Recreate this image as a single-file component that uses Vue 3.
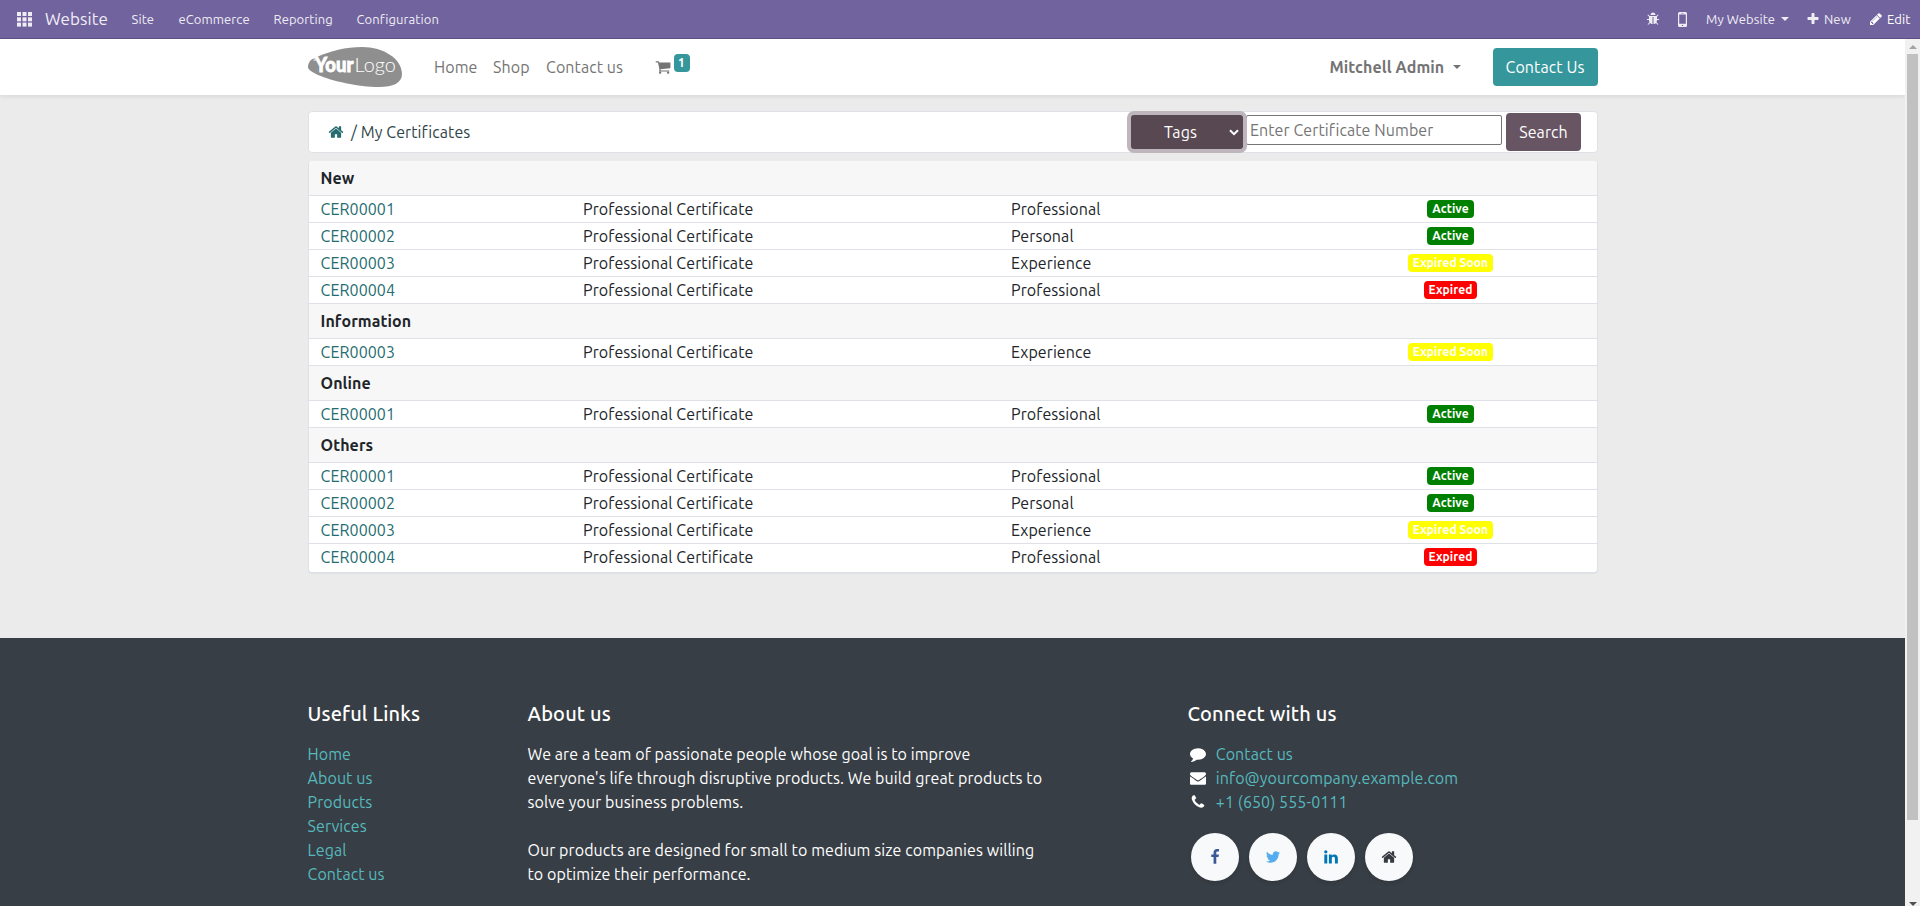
<script setup>
const icons = {
  home: 'M1472 992v480q0 26-19 45t-45 19h-384v-384h-256v384h-384q-26 0-45-19t-19-45v-480q0-1 .5-3t.5-3l575-474 575 474q1 2 1 6zm223-69l-62 74q-8 9-21 11h-3q-13 0-21-7l-692-577-692 577q-12 8-24 7-13-2-21-11l-62-74q-8-10-7-23.5t11-21.5l719-599q32-26 76-26t76 26l244 204v-195q0-14 9-23t23-9h192q14 0 23 9t9 23v408l219 182q10 8 11 21.5t-7 23.5z',
  cart: 'M704 1536q0 52-38 90t-90 38-90-38-38-90 38-90 90-38 90 38 38 90zm896 0q0 52-38 90t-90 38-90-38-38-90 38-90 90-38 90 38 38 90zm128-1088v512q0 24-16.5 42.5t-40.5 21.5l-1044 122q13 60 13 70 0 16-24 64h920q26 0 45 19t19 45-19 45-45 19h-1024q-26 0-45-19t-19-45q0-11 8-31.5t16-36 21.5-40 15.5-29.5l-177-823h-204q-26 0-45-19t-19-45 19-45 45-19h256q16 0 28.5 6.5t19.5 15.5 13 24.5 8 26 5.5 29.5 4.5 26h1201q26 0 45 19t19 45z',
  plus: 'M1600 736v192q0 40-28 68t-68 28h-416v416q0 40-28 68t-68 28h-192q-40 0-68-28t-28-68v-416h-416q-40 0-68-28t-28-68v-192q0-40 28-68t68-28h416v-416q0-40 28-68t68-28h192q40 0 68 28t28 68v416h416q40 0 68 28t28 68z',
  pencil: 'M491 1536l91-91-235-235-91 91v107h128v128h107zm523-928q0-22-22-22-10 0-17 7l-542 542q-7 7-7 17 0 22 22 22 10 0 17-7l542-542q7-7 7-17zm-54-192l416 416-832 832h-416v-416zm683 96q0 53-37 90l-166 166-416-416 166-165q36-38 90-38 53 0 91 38l235 234q37 39 37 91z',
  bug: 'M1696 960q0 26-19 45t-45 19h-224q0 171-67 290l208 209q19 19 19 45t-19 45q-18 19-45 19t-45-19l-198-197q-5 5-15 13t-42 28.5-65 36.5-82 29-97 13v-896h-128v896q-51 0-101.5-13.5t-87-33-66-39-43.5-32.5l-15-14-183 207q-20 21-48 21-24 0-43-16-19-18-20.5-44.5t15.5-46.5l202-227q-58-114-58-274h-224q-26 0-45-19t-19-45 19-45 45-19h224v-294l-173-173q-19-19-19-45t19-45 45-19 45 19l173 173h844l173-173q19-19 45-19t45 19 19 45-19 45l-173 173v294h224q26 0 45 19t19 45zm-480-576h-640q0-133 93.5-226.5t226.5-93.5 226.5 93.5 93.5 226.5z',
  facebook: 'M1343 12v264h-157q-86 0-116 36t-30 108v189h293l-39 296h-254v759h-306v-759h-255v-296h255v-218q0-186 104-288.5t277-102.5q147 0 228 12z',
  twitter: 'M1684 408q-67 98-162 167 1 14 1 42 0 130-38 259.5t-115.5 248.5-184.5 210.5-258 146-323 54.5q-271 0-496-145 35 4 78 4 225 0 401-138-105-2-188-64.5t-114-159.5q33 5 61 5 43 0 85-11-112-23-185.5-111.5t-73.5-205.5v-4q68 38 146 41-66-44-105-115t-39-154q0-88 44-163 121 149 294.5 238.5t371.5 99.5q-8-38-8-74 0-134 94.5-228.5t228.5-94.5q140 0 236 102 109-21 205-78-37 115-142 178 93-10 186-50z',
  linkedin: 'M477 625v991h-330v-991h330zm21-306q1 73-50.5 122t-135.5 49h-2q-82 0-132-49t-50-122q0-74 51.5-122.5t134.5-48.5 133 48.5 51 122.5zm1166 729v568h-329v-530q0-105-40.5-164.5t-126.5-59.5q-63 0-105.5 34.5t-63.5 85.5q-11 30-11 81v553h-329q2-399 2-647t-1-296l-1-48h329v144h-2q20-32 41-56t56.5-52 87-43.5 114.5-15.5q171 0 275 113.5t104 332.5z',
  comment: 'M1792 896q0 174-120 321.5t-326 233-450 85.5q-70 0-145-8-198 175-460 242-49 14-114 22-17 2-30.5-9t-17.5-29v-1q-3-4-.5-12t2-10 4.5-9.5l6-9 7-8.5 8-9q7-8 31-34.5t34.5-38 31-39.5 32.5-51 27-59 26-76q-157-89-247.5-220t-90.5-281q0-130 71-248.5t191-204.5 286-136.5 348-50.5q244 0 450 85.5t326 233 120 321.5z',
  envelope: 'M1792 710v794q0 66-47 113t-113 47h-1472q-66 0-113-47t-47-113v-794q44 49 101 87 362 246 497 345 57 42 92.5 65.5t94.5 48 110 24.5h2q51 0 110-24.5t94.5-48 92.5-65.5q170-123 498-345 57-39 100-87zm0-294q0 79-49 151t-122 123q-376 261-468 325-10 7-42.5 31t-54 38.5-52 32.5-57.5 27-50 9h-2q-23 0-50-9t-57.5-27-52-32.5-54-38.5-42.5-31q-91-64-262-182.5t-205-142.5q-62-42-117-115.5t-55-136.5q0-78 41.5-130t118.5-52h1472q65 0 112.5 47t47.5 113z',
  phone: 'M1600 1240q0 27-10 70.5t-21 68.5q-21 50-122 106-94 51-186 51-27 0-53-3.5t-57.5-12.5-47-14.5-55.5-20.5-49-18q-98-35-175-83-127-79-264-216t-216-264q-48-77-83-175-3-9-18-49t-20.5-55.5-14.5-47-12.5-57.5-3.5-53q0-92 51-186 56-101 106-122 25-11 68.5-21t70.5-10q14 0 21 3 18 6 53 76 11 19 30 54t35 63.5 31 53.5q3 4 17.5 25t21.5 35.5 7 28.5q0 20-28.5 50t-62 55-62 53-28.5 46q0 9 5 22.5t8.5 20.5 14 24 11.5 19q76 137 174 235t235 174q2 1 19 11.5t24 14 20.5 8.5 22.5 5q18 0 46-28.5t53-62 55-62 50-28.5q14 0 28.5 7t35.5 21.5 25 17.5q25 15 53.5 31t63.5 35 54 30q70 35 76 53 3 7 3 21z'
}

const cert = (n, type, status) => ({ id: 'CER0000' + n, type, status })
const c1 = cert(1, 'Professional', 'Active')
const c2 = cert(2, 'Personal', 'Active')
const c3 = cert(3, 'Experience', 'Expired Soon')
const c4 = cert(4, 'Professional', 'Expired')
const groups = [
  { tag: 'New', rows: [c1, c2, c3, c4] },
  { tag: 'Information', rows: [c3] },
  { tag: 'Online', rows: [c1] },
  { tag: 'Others', rows: [c1, c2, c3, c4] }
]
const badgeClass = { Active: 'active', 'Expired Soon': 'soon', Expired: 'expired' }

const footerLinks = ['Home', 'About us', 'Products', 'Services', 'Legal', 'Contact us']
const contacts = [
  { icon: 'comment', text: 'Contact us' },
  { icon: 'envelope', text: 'info@yourcompany.example.com' },
  { icon: 'phone', text: '+1 (650) 555-0111' }
]
const socials = ['facebook', 'twitter', 'linkedin', 'home']
</script>

<template>
  <div class="page">
    <nav class="topbar">
      <svg class="apps" viewBox="0 0 15 15">
        <template v-for="r in 3" :key="r">
          <rect v-for="c in 3" :key="c" :x="(c - 1) * 5.5" :y="(r - 1) * 5.3" width="4" height="4" />
        </template>
      </svg>
      <span class="brand">Website</span>
      <span class="menu m-site">Site</span>
      <span class="menu m-ecom">eCommerce</span>
      <span class="menu m-rep">Reporting</span>
      <span class="menu m-conf">Configuration</span>
      <div class="tools">
        <svg class="t-bug" viewBox="0 0 1792 1792"><path :d="icons.bug" /></svg>
        <svg class="t-mobile" viewBox="0 0 9 15">
          <path fill-rule="evenodd" d="M1.5 0h6A1.5 1.5 0 0 1 9 1.500v12A1.500 1.500 0 0 1 7.500 15h-6A1.500 1.500 0 0 1 0 13.500v-12A1.500 1.500 0 0 1 1.500 0zM1.200 2.500v9.300h6.600V2.500zM3.300 1v.5h2.400V1zM3.800 13.400a.7.7 0 1 0 1.400 0a.7.7 0 1 0-1.400 0z" />
        </svg>
        <span class="t-site">My Website</span>
        <span class="t-caret"></span>
        <svg class="t-plus" viewBox="0 0 1792 1792"><path :d="icons.plus" /></svg>
        <span class="t-new">New</span>
        <svg class="t-pencil" viewBox="0 0 1792 1792"><path :d="icons.pencil" /></svg>
        <span class="t-edit">Edit</span>
      </div>
    </nav>

    <div class="viewport">
      <div class="content">
        <header class="header">
          <svg class="logo" viewBox="0 0 94 40">
            <path d="M0 19C1 13 5 11 9 10C22 4 38 0 54 0C76 0 94 12 94 27C94 36 85 40 71 40C50 40 24 34 10 28C3 25-1 22 0 19z" fill="#8f8f8f" />
            <path d="M3.500 11h4.500M5.500 13h3M4 10h1.500" stroke="#fff" stroke-width="1" />
            <text x="7" y="25" class="logo-your" textLength="38.500" lengthAdjust="spacingAndGlyphs">Your</text>
            <text x="46.500" y="25" class="logo-logo" textLength="41.500" lengthAdjust="spacingAndGlyphs">Logo</text>
          </svg>
          <span class="nav n-home">Home</span>
          <span class="nav n-shop">Shop</span>
          <span class="nav n-contact">Contact us</span>
          <svg class="cart" viewBox="0 0 1792 1792"><path :d="icons.cart" /></svg>
          <span class="count">1</span>
          <span class="user">Mitchell Admin</span>
          <span class="user-caret"></span>
          <a class="cta">Contact Us</a>
        </header>

        <main class="main">
          <div class="crumbs">
            <svg class="c-home" viewBox="0 0 1792 1792"><path :d="icons.home" /></svg>
            <span class="c-text">/ My Certificates</span>
            <div class="search">
              <div class="select">
                <span>Tags</span>
                <svg viewBox="0 0 10 7"><path d="M1 1.200L5 5.200L9 1.200" fill="none" stroke="#fff" stroke-width="2" /></svg>
              </div>
              <input class="field" type="text" placeholder="Enter Certificate Number" />
              <button class="go">Search</button>
            </div>
          </div>

          <div class="table">
            <template v-for="g in groups" :key="g.tag">
              <div class="group">{{ g.tag }}</div>
              <div v-for="r in g.rows" :key="g.tag + r.id" class="row">
                <a class="cid">{{ r.id }}</a>
                <span>Professional Certificate</span>
                <span class="type">{{ r.type }}</span>
                <span class="status"><b :class="['badge', badgeClass[r.status]]">{{ r.status }}</b></span>
              </div>
            </template>
          </div>
        </main>

        <footer class="footer">
          <section class="f-links">
            <h5>Useful Links</h5>
            <a v-for="l in footerLinks" :key="l">{{ l }}</a>
          </section>
          <section class="f-about">
            <h5>About us</h5>
            <p>We are a team of passionate people whose goal is to improve<br />everyone's life through disruptive products. We build great products to<br />solve your business problems.</p>
            <p>Our products are designed for small to medium size companies willing<br />to optimize their performance.</p>
          </section>
          <section class="f-connect">
            <h5>Connect with us</h5>
            <div v-for="c in contacts" :key="c.icon" class="contact">
              <svg viewBox="0 0 1792 1792"><path :d="icons[c.icon]" /></svg>
              <a>{{ c.text }}</a>
            </div>
            <div class="socials">
              <span v-for="s in socials" :key="s" :class="['social', 's-' + s]">
                <svg viewBox="0 0 1792 1792"><path :d="icons[s]" /></svg>
              </span>
            </div>
          </section>
        </footer>
      </div>

      <div class="scrollbar">
        <i class="up"></i>
        <div class="thumb"></div>
        <i class="down"></i>
      </div>
    </div>
  </div>
</template>

<style>
html,
body {
  margin: 0;
  overflow: hidden;
}
</style>

<style scoped>
* {
  box-sizing: border-box;
}
.page {
  width: 1920px;
  height: 906px;
  overflow: hidden;
  display: flex;
  flex-direction: column;
  font-family: Ubuntu, "Noto Sans", "Open Sans", sans-serif;
  font-size: 16px;
  line-height: 24px;
  letter-spacing: 0.085px;
  color: #212529;
  background: #ebebeb;
}
span,
a,
b {
  white-space: nowrap;
}
svg {
  display: block;
  flex: none;
  fill: currentColor;
}
.topbar {
  flex: none;
  height: 39px;
  background: #71639e;
  border-bottom: 1px solid #5c4f85;
  display: flex;
  align-items: center;
  padding-left: 17px;
  font-size: 13px;
  color: #efedf4;
}
.apps {
  width: 15px;
  height: 15px;
  margin-right: 13px;
}
.brand {
  width: 86.500px;
  font-size: 17px;
}
.m-site { width: 47px; }
.m-ecom { width: 95px; }
.m-rep { width: 83px; }
.tools {
  margin-left: auto;
  width: 274px;
  display: flex;
  align-items: center;
}
.t-bug { width: 14px; height: 14px; margin-right: 18px; }
.t-mobile { width: 9px; height: 15px; margin-right: 19px; }
.t-site { width: 75px; }
.t-caret {
  border: 4px solid transparent;
  border-top-color: currentColor;
  border-bottom: 0;
  margin-right: 17px;
}
.t-plus { width: 14px; height: 14px; margin-right: 4px; }
.t-new { width: 45px; }
.t-pencil { width: 14px; height: 14px; color: #fff; margin-right: 4px; }
.t-edit { color: #fff; }

.viewport {
  flex: 1;
  min-height: 0;
  display: flex;
}
.content {
  width: 1905px;
  display: flex;
  flex-direction: column;
}
.header {
  flex: none;
  height: 56px;
  background: #fff;
  box-shadow: 0 2px 4px rgba(0, 0, 0, 0.075);
  padding-left: 307.5px;
  display: flex;
  align-items: center;
  color: #747474;
}
.logo {
  width: 94px;
  height: 40px;
  margin-right: 32.500px;
}
.logo text { fill: #fff; }
.logo-your { font: 900 20px Lato, sans-serif; stroke: #fff; stroke-width: 0.8px; }
.logo-logo { font: 300 20.500px Lato, sans-serif; }
.n-home { width: 59px; }
.n-shop { width: 53px; }
.n-contact { width: 109px; }
.cart { width: 16px; height: 16px; margin-right: 2.500px; }
.count {
  width: 16px;
  height: 18px;
  margin-bottom: 8px;
  border-radius: 4px;
  background: #35979c;
  color: #fff;
  font-size: 12px;
  font-weight: 700;
  line-height: 17px;
  text-align: center;
}
.user {
  margin-left: 640px;
  width: 123px;
  font-weight: 700;
}
.user-caret {
  width: 8px;
  border: 4px solid transparent;
  border-top-color: currentColor;
  border-bottom: 0;
}
.cta {
  margin-left: 32px;
  width: 105px;
  height: 38px;
  border-radius: 4px;
  background: #35979c;
  color: #fff;
  line-height: 38px;
  text-align: center;
}
.main {
  flex: none;
  height: 543px;
  padding: 16px 0 0 307.5px;
}
.crumbs {
  width: 1290px;
  height: 42px;
  background: #fff;
  border: 1px solid #dee2e6;
  border-radius: 4px;
  display: flex;
  align-items: center;
  padding: 0 15.500px 0 19px;
}
.c-home { width: 16px; height: 16px; color: #256b6f; margin-right: 7.500px; }
.c-text { color: #2f4549; }
.search {
  margin-left: auto;
  display: flex;
  align-items: center;
}
.select {
  width: 112px;
  height: 34px;
  border-radius: 3px;
  background: #574851;
  box-shadow: 0 0 0 4px #bfb5bd;
  color: #fff;
  display: flex;
  align-items: center;
  padding-left: 33px;
  margin-right: 3px;
  z-index: 1;
}
.select span { width: 65px; }
.select svg { width: 10px; height: 7px; }
.field {
  width: 256px;
  height: 30px;
  margin-bottom: 4px;
  border: 1px solid #767676;
  border-radius: 2px;
  padding: 0 3px;
  font: inherit;
  letter-spacing: inherit;
}
.field::placeholder { color: #757575; }
.go {
  margin-left: 4px;
  width: 75px;
  height: 38px;
  border: 0;
  border-radius: 4px;
  background: #685563;
  color: #fff;
  font: inherit;
  letter-spacing: inherit;
  padding: 0;
}
.table {
  margin-top: 8px;
  width: 1290px;
  height: 412px;
  background: #fff;
  border: 1px solid #dee2e6;
  border-top: 0;
  border-radius: 4px;
  box-shadow: 0 1px 0 #dee2e6;
  overflow: hidden;
}
.group {
  height: 35px;
  padding-left: 12px;
  line-height: 35px;
  font-weight: 700;
  background: #f7f7f7;
  border-bottom: 1px solid #dee2e6;
}
.row {
  height: 27px;
  padding-left: 12px;
  display: grid;
  grid-template-columns: 262.500px 428px 293px 293px;
  align-items: center;
  border-bottom: 1px solid #dee2e6;
}
.row:last-child { border-bottom-color: transparent; }
.cid { color: #256b6f; }
.status { display: flex; justify-content: center; }
.badge {
  height: 18px;
  border-radius: 4px;
  color: #fff;
  font-size: 12px;
  line-height: 17px;
  text-align: center;
}
.active { width: 47px; background: #008000; }
.soon { width: 85px; background: #ff0; }
.expired { width: 53px; background: #f00; }

.footer {
  flex: 1;
  background: #383e45;
  padding: 64px 0 0 307.5px;
  display: flex;
  color: #fff;
  overflow: hidden;
}
.footer h5 {
  margin: 0 0 16px;
  font-size: 20px;
  line-height: 24px;
  font-weight: 500;
  letter-spacing: 0.17px;
}
.footer a { color: #55b9bd; }
.f-links { width: 220px; display: flex; flex-direction: column; }
.f-about { width: 660px; }
.f-about p { margin: 0 0 24px; white-space: nowrap; }
.contact { display: flex; align-items: center; height: 24px; }
.contact svg { width: 16px; height: 16px; margin: 0 10px 0 2.300px; }
.socials { display: flex; gap: 10px; margin: 19px 0 0 3.500px; }
.social {
  width: 48px;
  height: 48px;
  border-radius: 50%;
  background: #f8f9fb;
  box-shadow: 0 2px 4px rgba(0, 0, 0, 0.12);
  display: flex;
  align-items: center;
  justify-content: center;
}
.social svg { width: 16px; height: 16px; }
.s-facebook { color: #3b5998; }
.s-twitter { color: #55acee; }
.s-linkedin { color: #0077b5; }
.s-home { color: #343a40; }

.scrollbar {
  width: 15px;
  background: #f1f1f1;
  display: flex;
  flex-direction: column;
  align-items: center;
  overflow: hidden;
}
.up,
.down {
  flex: none;
  width: 8px;
  border: 4px solid transparent;
}
.up { margin-top: 6px; border-top: 0; border-bottom-color: #a3a3a3; }
.thumb { flex: none; width: 11px; height: 766px; margin-top: 5px; background: #c1c1c1; }
.down { margin-top: 82px; border-bottom: 0; border-top-color: #505050; }
</style>
